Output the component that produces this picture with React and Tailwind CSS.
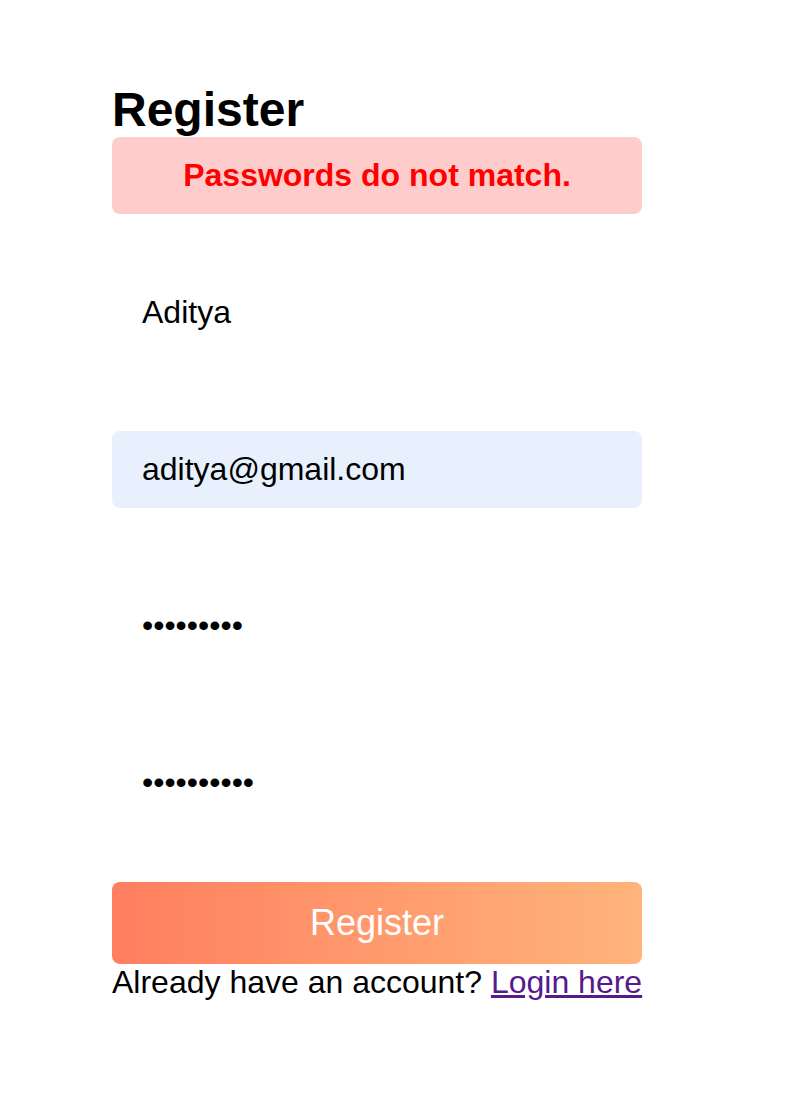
export default function App() {
  return (
    <div className="min-h-[1095px] bg-white font-['Liberation_Sans',Arial,sans-serif] text-black">
      <div className="ml-[112px] w-[530px] pt-[82px]">
        <h1 className="text-[48px] font-bold leading-[55px]">Register</h1>
        <div className="rounded-lg bg-[#ffcccc] py-5 text-center text-[32px] font-bold leading-[37px] text-[#ff0000]">
          Passwords do not match.
        </div>
        <form className="flex flex-col" onSubmit={(e) => e.preventDefault()}>
          <input
            type="text"
            defaultValue="Aditya"
            className="mt-[60px] h-[77px] w-full rounded-lg bg-white px-[30px] text-[32px] leading-[37px] outline-none"
          />
          <input
            type="email"
            defaultValue="aditya@gmail.com"
            className="mt-[80px] h-[77px] w-full rounded-lg bg-[#e8f0fe] px-[30px] text-[32px] leading-[37px] outline-none"
          />
          <input
            type="password"
            defaultValue="123456789"
            className="mt-[79px] h-[77px] w-full rounded-lg bg-white px-[30px] text-[32px] leading-[37px] outline-none"
          />
          <input
            type="password"
            defaultValue="1234567890"
            className="mt-[80px] h-[77px] w-full rounded-lg bg-white px-[30px] text-[32px] leading-[37px] outline-none"
          />
          <button
            type="submit"
            className="mt-[61px] flex h-[82px] w-full items-center justify-center rounded-lg bg-gradient-to-r from-[#ff7e5f] to-[#feb47b] pb-[2px] text-[36px] leading-[41px] text-white"
          >
            Register
          </button>
        </form>
        <p className="whitespace-nowrap text-[32px] leading-[37px]">
          Already have an account?{' '}
          <a href="#" className="text-[#551a8b] underline">
            Login here
          </a>
        </p>
      </div>
    </div>
  );
}
